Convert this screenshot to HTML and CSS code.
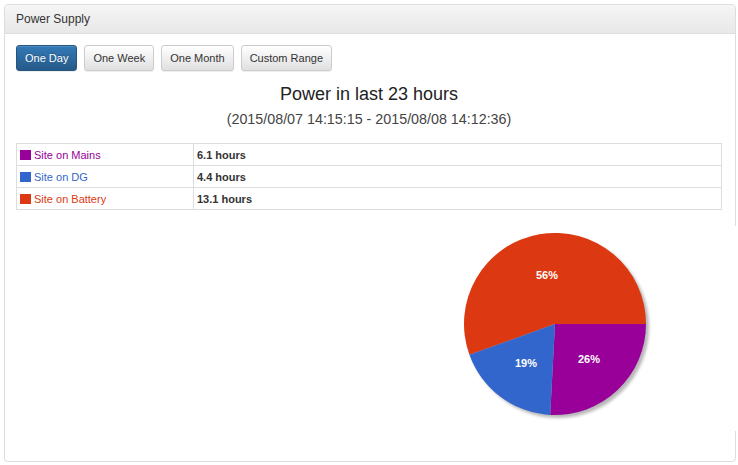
FILE: index.html
```html
<!DOCTYPE html>
<html>
<head>
<meta charset="utf-8">
<link rel="stylesheet" href="styles.css">
</head>
<body>
<div class="panel">
  <div class="panel-heading">Power Supply</div>
  <div class="panel-body">
    <div class="btn-row">
      <button class="btn btn-primary">One Day</button>
      <button class="btn">One Week</button>
      <button class="btn">One Month</button>
      <button class="btn">Custom Range</button>
    </div>
    <div class="title">Power in last 23 hours</div>
    <div class="subtitle">(2015/08/07 14:15:15 - 2015/08/08 14:12:36)</div>
    <table class="summary">
      <tr><td class="lbl mains"><span class="sq"></span>Site on Mains</td><td class="val">6.1 hours</td></tr>
      <tr><td class="lbl dg"><span class="sq"></span>Site on DG</td><td class="val">4.4 hours</td></tr>
      <tr><td class="lbl batt"><span class="sq"></span>Site on Battery</td><td class="val">13.1 hours</td></tr>
    </table>
    <div class="chart-row">
      <div class="chart">
        <svg width="300" height="205" viewBox="0 0 300 205">
          <defs>
            <filter id="sh" x="-20%" y="-20%" width="140%" height="140%">
              <feGaussianBlur stdDeviation="1.6"/>
            </filter>
          </defs>
          <circle cx="120" cy="101" r="91" fill="rgba(0,0,0,0.28)" filter="url(#sh)"/>
          <path d="M117,98 L31.4,128.8 A91,91 0 1 1 208,98 Z" fill="#dc3912"/>
          <path d="M117,98 L208,98 A91,91 0 0 1 112.2,188.9 Z" fill="#990099"/>
          <path d="M117,98 L112.2,188.9 A91,91 0 0 1 31.4,128.8 Z" fill="#3366cc"/>
          <text x="109" y="53" class="pl">56%</text>
          <text x="88" y="141" class="pl">19%</text>
          <text x="151" y="137" class="pl">26%</text>
        </svg>
      </div>
    </div>
  </div>
</div>
</body>
</html>
```

FILE: styles.css
```css
html, body {
  margin: 0;
  padding: 0;
  background: #fff;
}
body {
  padding: 4px 2px 0 4px;
  font-family: "Liberation Sans", Arial, sans-serif;
  color: #333;
}
.panel {
  width: 730px;
  border: 1px solid #ddd;
  border-radius: 4px;
  box-shadow: 0 1px 1px rgba(0,0,0,0.05);
}
.panel-heading {
  height: 28px;
  line-height: 28px;
  padding: 0 11px;
  font-size: 12px;
  color: #333;
  background: linear-gradient(to bottom, #f5f5f5 0%, #e8e8e8 100%);
  border-bottom: 1px solid #ddd;
  border-radius: 3px 3px 0 0;
}
.panel-body {
  padding: 11px 13px 30px 11px;
}
.btn-row {
  display: flex;
  gap: 7px;
}
.btn {
  height: 26px;
  padding: 0 8px;
  font-family: "Liberation Sans", Arial, sans-serif;
  font-size: 11px;
  color: #333;
  border: 1px solid #ccc;
  border-radius: 3px;
  background: linear-gradient(to bottom, #fff 0%, #e0e0e0 100%);
  box-shadow: inset 0 1px 0 rgba(255,255,255,0.15), 0 1px 1px rgba(0,0,0,0.075);
}
.btn-primary {
  color: #fff;
  border-color: #245580;
  background: linear-gradient(to bottom, #337ab7 0%, #265a88 100%);
  text-shadow: 0 -1px 0 rgba(0,0,0,0.2);
}
.title {
  margin-top: 11px;
  text-align: center;
  font-size: 18px;
  line-height: 24px;
  color: #222;
}
.subtitle {
  margin-top: 4px;
  text-align: center;
  font-size: 14.3px;
  line-height: 18px;
  color: #444;
}
.summary {
  margin-top: 15px;
  width: 706px;
  border-collapse: collapse;
  font-size: 11px;
}
.summary td {
  border: 1px solid #ddd;
  height: 21px;
  padding: 0 3px;
  line-height: 20px;
  white-space: nowrap;
}
.summary td.lbl {
  width: 170px;
}
.summary td.val {
  font-weight: bold;
  color: #333;
}
.sq {
  display: inline-block;
  width: 11px;
  height: 10px;
  margin-right: 3px;
  vertical-align: -1px;
}
.mains { color: #990099; }
.mains .sq { background: #990099; }
.dg { color: #3366cc; }
.dg .sq { background: #3366cc; }
.batt { color: #dc3912; }
.batt .sq { background: #dc3912; }
.chart-row {
  display: flex;
  justify-content: flex-end;
  margin-top: 16px;
  margin-right: -16px;
}
.chart {
  width: 300px;
  height: 205px;
  background: #fff;
  position: relative;
}
.chart svg {
  display: block;
}
.pl {
  font-family: "Liberation Sans", Arial, sans-serif;
  font-size: 11px;
  font-weight: bold;
  fill: #fff;
  text-anchor: middle;
}
```
